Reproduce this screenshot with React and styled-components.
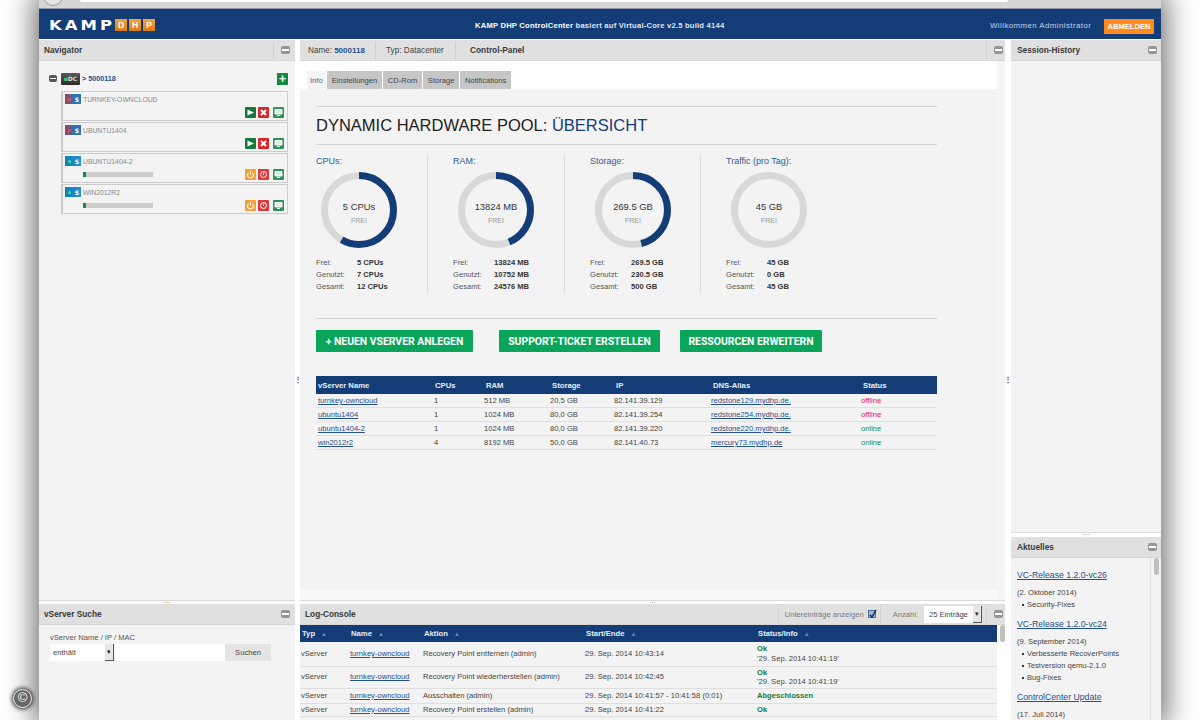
import styled, { createGlobalStyle } from "styled-components";

const BLUE = "#143d78";

const servers = [
  { name: "TURNKEY-OWNCLOUD", on: false },
  { name: "UBUNTU1404", on: false },
  { name: "UBUNTU1404-2", on: true },
  { name: "WIN2012R2", on: true },
];

const pools = [
  { title: "CPUs:", big: "5 CPUs", used: 7 / 12, rows: ["5 CPUs", "7 CPUs", "12 CPUs"] },
  { title: "RAM:", big: "13824 MB", used: 10752 / 24576, rows: ["13824 MB", "10752 MB", "24576 MB"] },
  { title: "Storage:", big: "269.5 GB", used: 230.5 / 500, rows: ["269.5 GB", "230.5 GB", "500 GB"] },
  { title: "Traffic (pro Tag):", big: "45 GB", used: 0, rows: ["45 GB", "0 GB", "45 GB"] },
];

const poolWidths = [112, 137, 136, 150];

const vservers = [
  ["turnkey-owncloud", "1", "512 MB", "20,5 GB", "82.141.39.129", "redstone129.mydhp.de.", "offline"],
  ["ubuntu1404", "1", "1024 MB", "80,0 GB", "82.141.39.254", "redstone254.mydhp.de.", "offline"],
  ["ubuntu1404-2", "1", "1024 MB", "80,0 GB", "82.141.39.220", "redstone220.mydhp.de.", "online"],
  ["win2012r2", "4", "8192 MB", "50,0 GB", "82.141.40.73", "mercury73.mydhp.de", "online"],
];

const logs = [
  { action: "Recovery Point entfernen (admin)", time: "29. Sep. 2014 10:43:14", status: "Ok", info: "'29. Sep. 2014 10:41:19'", h: 24 },
  { action: "Recovery Point wiederherstellen (admin)", time: "29. Sep. 2014 10:42:45", status: "Ok", info: "'29. Sep. 2014 10:41:19'", h: 22 },
  { action: "Ausschalten (admin)", time: "29. Sep. 2014 10:41:57 - 10:41:58 (0:01)", status: "Abgeschlossen", h: 15 },
  { action: "Recovery Point erstellen (admin)", time: "29. Sep. 2014 10:41:22", status: "Ok", h: 13 },
];

const news = [
  { title: "VC-Release 1.2.0-vc26", date: "(2. Oktober 2014)", items: ["Security-Fixes"] },
  { title: "VC-Release 1.2.0-vc24", date: "(9. September 2014)", items: ["Verbesserte RecoverPoints", "Testversion qemu-2.1.0", "Bug-Fixes"] },
  { title: "ControlCenter Update", date: "(17. Juli 2014)", items: [] },
];

const GlobalStyle = createGlobalStyle`
  html, body {
    margin: 0;
    height: 720px;
    overflow: hidden;
    background: #ffffff;
    font-family: "Liberation Sans", Arial, sans-serif;
    font-size: 7.6px;
    color: #444;
  }
  a { color: #24508f; }
`;

const Win = styled.div`
  width: 1122px;
  height: 720px;
  margin-left: 39px;
  background: #fff;
  box-shadow: 0 0 26px 6px rgba(0, 0, 0, 0.55);
  display: flex;
  flex-direction: column;
  overflow: hidden;
`;

const Chrome = styled.div`
  height: 9px;
  flex: none;
  background: #d6d6d6;
  border-bottom: 1px solid #8f98a5;
  box-sizing: border-box;
  display: flex;
  align-items: flex-start;
  padding-left: 4px;
`;

const ChromeRound = styled.div`
  width: 20px;
  height: 20px;
  margin-top: -14px;
  border-radius: 50%;
  border: 1px solid #999;
  box-sizing: border-box;
  background: #e4e4e4;
`;

const ChromeField = styled.div`
  width: 928px;
  height: 2px;
  margin-left: 17px;
  background: #fff;
  border-radius: 0 0 4px 4px;
`;

const TopBar = styled.header`
  height: 30px;
  flex: none;
  box-sizing: border-box;
  background: ${BLUE};
  display: flex;
  align-items: center;
  padding: 2px 7px 0 10px;
`;

const Logo = styled.div`
  width: 426px;
  display: flex;
  align-items: center;
  flex: none;
`;

const LogoWord = styled.span`
  font-family: "DejaVu Sans", sans-serif;
  font-weight: 700;
  font-size: 16.5px;
  letter-spacing: 3px;
  margin-right: -2px;
  color: #fff;
  line-height: 15px;
  transform: scaleY(0.84);
`;

const LogoTile = styled.span`
  width: 12px;
  height: 12px;
  margin-left: 2px;
  background: linear-gradient(#f6a33a, #dc7c12);
  color: #fff;
  font-weight: 700;
  font-size: 8.5px;
  line-height: 12px;
  text-align: center;
`;

const TopTitle = styled.div`
  width: 515px;
  flex: none;
  font-weight: 700;
  font-size: 7.6px;
  letter-spacing: 0.22px;
  color: #dfe6f0;
  b { color: #fff; }
`;

const Welcome = styled.div`
  font-size: 7.9px;
  letter-spacing: 0.42px;
  color: #c6d2e4;
  flex: 1;
`;

const Logout = styled.button`
  width: 50px;
  height: 15px;
  margin-top: 3px;
  padding: 0;
  border: 0;
  background: #ff8a1f;
  color: #fff;
  font: 700 7.6px "Liberation Sans", Arial, sans-serif;
`;

const Main = styled.div`
  flex: 1;
  min-height: 0;
  display: grid;
  grid-template-columns: 256px 5px 705px 6px 150px;
`;

const Column = styled.div`
  display: flex;
  flex-direction: column;
  min-height: 0;
  padding-top: 1px;
`;

const Panel = styled.section`
  display: flex;
  flex-direction: column;
  min-height: 0;
  flex: ${(p) => (p.$height ? `0 0 ${p.$height}px` : "1")};
  background: #f3f3f3;
  overflow: hidden;
`;

const PanelHead = styled.div`
  height: 21px;
  flex: none;
  background: #e0e0e0;
  border-bottom: 1px solid #d6d6d6;
  box-sizing: border-box;
  display: flex;
  align-items: center;
  padding: 0 ${(p) => p.$right || 5}px 0 ${(p) => p.$left || 5}px;
  font-size: 8.2px;
  color: #444;
`;

const PanelTitle = styled.div`
  font-weight: 700;
  font-size: 8.3px;
  color: #3a3a3a;
  flex: 1;
`;

const HeadCell = styled.div`
  height: 17px;
  display: flex;
  align-items: center;
  box-sizing: border-box;
  width: ${(p) => p.$w}px;
  padding-left: ${(p) => p.$pad || 0}px;
  border-right: ${(p) => (p.$line ? "1px solid #cfcfcf" : "0")};
  b { color: #24508f; margin-left: 2px; font-weight: 700; font-size: 8px; }
`;

const Minimize = styled.span`
  width: 9px;
  height: 8px;
  flex: none;
  margin: 0 0 0 auto;
  border-radius: 2px;
  background: #959595;
  display: flex;
  align-items: center;
  justify-content: center;
  &::after {
    content: "";
    width: 7px;
    height: 2px;
    background: #fff;
  }
`;

const MinCell = styled.div`
  width: 16px;
  height: 17px;
  margin-left: ${(p) => (p.$flush ? 0 : "auto")};
  border-left: 1px solid #cfcfcf;
  display: flex;
  align-items: center;
  flex: none;
`;

const HSplit = styled.div`
  height: ${(p) => p.$h || 4}px;
  flex: none;
  background: #fff;
  border-top: 1px solid #d9d9d9;
  box-sizing: border-box;
  color: #555;
  font-size: 7px;
  line-height: 0;
  text-align: center;
`;

const VSplit = styled.div`
  background: #fff;
  display: flex;
  align-items: center;
  justify-content: center;
  color: #555;
  font-size: 8px;
  font-weight: 700;
`;

const NavBody = styled.div`
  flex: 1;
  padding: 11px 7px 0 10px;
`;

const TreeRoot = styled.div`
  height: 13px;
  display: flex;
  align-items: center;
  font-weight: 700;
  font-size: 7.2px;
  color: #24508f;
  margin-bottom: 6px;
`;

const TreeToggle = styled.span`
  width: 8px;
  height: 7px;
  margin: 0 4px 0 0;
  border-radius: 2px;
  background: #555;
  display: flex;
  align-items: center;
  justify-content: center;
  &::after {
    content: "";
    width: 6px;
    height: 1.5px;
    background: #fff;
  }
`;

const DcBadge = styled.span`
  width: 19px;
  height: 12px;
  margin-right: 2px;
  background: linear-gradient(#5a5a5a, #2c2c2c);
  color: #ddd;
  font: 700 6px "DejaVu Sans", sans-serif;
  line-height: 12px;
  text-align: center;
  border-radius: 1px;
  i { color: #3ed35f; font-style: normal; }
`;

const AddBtn = styled.span`
  width: 11px;
  height: 12px;
  margin-left: auto;
  background: #0f8a3f;
  color: #fff;
  font: 700 12px/12px "Liberation Sans", sans-serif;
  text-align: center;
`;

const Cards = styled.div`
  margin-left: 12px;
  display: flex;
  flex-direction: column;
  gap: 1px;
`;

const Card = styled.div`
  height: 30px;
  box-sizing: border-box;
  border: 1px solid #cbcbcb;
  border-left-width: 2px;
  padding: 2px 3px 0 2px;
`;

const CardTop = styled.div`
  height: 10px;
  display: flex;
  align-items: center;
  color: #888;
  font-size: 6.8px;
`;

const VmBadge = styled.span`
  width: 16px;
  height: 10px;
  margin-right: 2px;
  flex: none;
  display: flex;
  align-items: center;
  justify-content: space-between;
  padding: 0 2px 0 3px;
  box-sizing: border-box;
  background: ${(p) => (p.$on ? "linear-gradient(90deg,#0f7fb8,#2293d0)" : "linear-gradient(90deg,#a83f58,#2a73b8 60%)")};
  color: #fff;
  font: 700 6px "DejaVu Sans", sans-serif;
  i {
    width: 3px;
    height: 3px;
    border-radius: 50%;
    background: ${(p) => (p.$on ? "#4fe08a" : "#ff4a55")};
  }
`;

const CardBottom = styled.div`
  height: 12px;
  margin-top: 2px;
  display: flex;
  align-items: center;
`;

const Progress = styled.div`
  width: 70px;
  height: 5px;
  margin: 0 0 0 18px;
  background: #ccc;
  &::before {
    content: "";
    display: block;
    width: 3px;
    height: 5px;
    background: #1c8a3f;
  }
`;

const Actions = styled.div`
  margin-left: auto;
  display: flex;
  align-items: center;
`;

const Act = styled.span`
  width: 11px;
  height: 11px;
  margin-left: ${(p) => p.$gap || 2}px;
  display: flex;
  background: ${(p) => p.$bg};
  border-radius: 1px;
  svg { display: block; }
`;

function IconPlay() {
  return (
    <Act $bg="#137a3c">
      <svg width="11" height="11" viewBox="0 0 11 11"><path d="M2.5 2.5L9 5.5L2.5 8.5Z" fill="#fff" /></svg>
    </Act>
  );
}
function IconStop() {
  return (
    <Act $bg="#d9252b">
      <svg width="11" height="11" viewBox="0 0 11 11"><path d="M3 3L8 8M8 3L3 8" stroke="#fff" strokeWidth="2" /></svg>
    </Act>
  );
}
function IconScreen() {
  return (
    <Act $bg="#2f9158" $gap={4}>
      <svg width="11" height="11" viewBox="0 0 11 11"><path d="M2 2.5H9V7H2Z M4 8.5H7" fill="#d9efe0" stroke="#fff" /></svg>
    </Act>
  );
}
function IconPower() {
  return (
    <Act $bg="#f5a032">
      <svg width="11" height="11" viewBox="0 0 11 11"><path d="M3.5 3.8A3 3 0 1 0 7.5 3.8M5.5 2V5.5" fill="none" stroke="#fff" strokeWidth="1.1" /></svg>
    </Act>
  );
}
function IconHalt() {
  return (
    <Act $bg="#e0363c">
      <svg width="11" height="11" viewBox="0 0 11 11"><circle cx="5.5" cy="5.5" r="3" fill="none" stroke="#fff" /><path d="M5.5 3.8V6" stroke="#fff" /></svg>
    </Act>
  );
}

const SearchBody = styled.div`
  padding: 8px 0 0 11px;
  color: #555;
`;

const SearchRow = styled.div`
  display: flex;
  margin-top: 2px;
  height: 17px;
`;

const FakeSelect = styled.div`
  width: ${(p) => p.$w}px;
  height: 17px;
  margin-left: ${(p) => p.$left || 0}px;
  box-sizing: border-box;
  background: #fff;
  display: flex;
  align-items: center;
  padding-left: ${(p) => p.$pad || 3}px;
  color: #444;
  flex: none;
  &::after {
    content: "▾";
    width: 9px;
    height: 100%;
    margin-left: auto;
    background: #e6e6e6;
    border-right: 1px solid #555;
    border-bottom: 1px solid #555;
    box-sizing: border-box;
    font-size: 7px;
    display: flex;
    align-items: center;
    justify-content: center;
    color: #222;
  }
`;

const SearchInput = styled.div`
  width: 110px;
  margin-left: 1px;
  background: #fff;
`;

const SearchBtn = styled.div`
  width: 46px;
  background: #e4e4e4;
  display: flex;
  align-items: center;
  justify-content: center;
  color: #444;
`;

const CenterBody = styled.div`
  flex: 1;
  display: flex;
  min-height: 0;
`;

const CenterInner = styled.div`
  width: 697px;
  flex: none;
  background: #fff;
  padding-top: 10px;
  display: flex;
  flex-direction: column;
  border-bottom: 10px solid #f9f9f9;
`;

const Tabs = styled.div`
  display: flex;
  height: 18px;
  padding-left: 7px;
  gap: 1.5px;
  flex: none;
`;

const Tab = styled.div`
  padding: 0 ${(p) => (p.$active ? 3 : 4.5)}px;
  display: flex;
  align-items: center;
  font-size: 7.6px;
  color: ${(p) => (p.$active ? "#3c6aa5" : "#444")};
  background: ${(p) => (p.$active ? "#f3f3f3" : "#c6c6c6")};
`;

const Content = styled.div`
  flex: 1;
  background: #f3f3f3;
  padding: 17px 60px 0 16px;
`;

const Rule = styled.hr`
  border: 0;
  height: 1px;
  margin: ${(p) => p.$top || 0}px 0 0;
  background: #d4d4d4;
`;

const Title = styled.h1`
  margin: 0;
  height: 37px;
  font-weight: 400;
  font-size: 16.5px;
  line-height: 37px;
  color: #222;
  span { color: ${BLUE}; }
`;

const PoolRow = styled.div`
  display: flex;
  margin-top: 10px;
  height: 138px;
`;

const Pool = styled.div`
  flex: none;
  box-sizing: border-box;
  width: ${(p) => p.$w}px;
  padding-left: ${(p) => (p.$first ? 0 : 25)}px;
  border-right: ${(p) => (p.$last ? "0" : "1px solid #dcdcdc")};
`;

const PoolTitle = styled.div`
  font-size: 9px;
  color: #2f5c96;
  height: 17px;
  line-height: 12px;
`;

const Ring = styled.div`
  position: relative;
  width: 76px;
  height: 76px;
  margin: 0 0 9px 5px;
`;

const RingLabel = styled.div`
  position: absolute;
  inset: 0;
  padding-top: 4px;
  box-sizing: border-box;
  display: flex;
  flex-direction: column;
  align-items: center;
  justify-content: center;
  font-size: 9.4px;
  color: #333;
  small {
    font-size: 7px;
    color: #999;
    margin-top: 5px;
  }
`;

const StatRow = styled.div`
  display: flex;
  height: 12px;
  line-height: 12px;
  color: #555;
  span { width: 41px; }
  b { color: #333; }
`;

const ActionRow = styled.div`
  display: flex;
  margin: 11px 0 24px;
`;

const GreenBtn = styled.button`
  height: 22px;
  width: ${(p) => p.$w}px;
  margin-right: ${(p) => p.$gap || 0}px;
  padding: 0;
  border: 0;
  border-radius: 1px;
  background: #09a55b;
  color: #fff;
  font: 700 10.4px "Roboto", sans-serif;
`;

const Grid = styled.table`
  width: 621px;
  border-collapse: collapse;
  table-layout: fixed;
  color: #444;
  th {
    height: 18px;
    padding: 0 0 0 2px;
    background: ${BLUE};
    color: #e8edf5;
    font-weight: 700;
    text-align: left;
    font-size: 7.7px;
  }
  th:nth-child(n + 3) { padding-left: 3px; }
  td {
    height: 13px;
    padding: 0 0 0 1px;
    border-bottom: 1px solid #e0e0e0;
  }
  td:first-child { padding-left: 2px; }
`;

const Stat = styled.span`
  color: ${(p) => (p.$on ? "#2a8a48" : "#e0262c")};
`;

const LogTools = styled.div`
  display: flex;
  align-items: center;
  margin-left: auto;
  color: #777;
  font-size: 7.6px;
`;

const ToolCell = styled.div`
  height: 17px;
  display: flex;
  align-items: center;
  border-left: 1px solid #cfcfcf;
  padding: 0 4px 0 ${(p) => p.$pad || 6}px;
`;

const Check = styled.span`
  width: 8px;
  height: 8px;
  margin-left: 4px;
  background: #9db7dc;
  border: 1px solid #4a6fa5;
  box-sizing: border-box;
  svg { display: block; margin: -2px 0 0 0; }
`;

const LogWrap = styled.div`
  flex: 1;
  display: flex;
  min-height: 0;
`;

const LogTable = styled.table`
  width: 697px;
  flex: none;
  height: min-content;
  border-collapse: collapse;
  table-layout: fixed;
  color: #444;
  th {
    height: 17px;
    padding: 0 0 0 2px;
    background: ${BLUE};
    color: #e8edf5;
    font-weight: 700;
    text-align: left;
    font-size: 7.7px;
  }
  th i {
    color: #6c8ab5;
    font-style: normal;
    font-weight: 400;
    margin-left: 6px;
    font-size: 6px;
  }
  td {
    padding: 0 0 0 1px;
    border-bottom: 1px solid #dedede;
    line-height: 9.5px;
  }
`;

const LogRow = styled.tr`
  height: ${(p) => p.$h}px;
`;

const Okay = styled.b`
  color: #137a38;
  display: block;
`;

const ScrollTrack = styled.div`
  flex: 1;
  background: ${(p) => p.$bg || "#fff"};
  padding-left: ${(p) => p.$pad || 3}px;
`;

const ScrollThumb = styled.div`
  width: 5px;
  height: 17px;
  border-radius: 3px;
  background: #bfbfbf;
`;

const NewsWrap = styled.div`
  flex: 1;
  display: flex;
  min-height: 0;
`;

const NewsBody = styled.div`
  width: 140px;
  flex: none;
  box-sizing: border-box;
  padding: 11px 0 0 6px;
  border-right: 1px solid #e2e2e2;
  color: #444;
`;

const NewsLink = styled.a`
  display: block;
  height: 18px;
  line-height: 12px;
  font-size: 8.7px;
  white-space: nowrap;
`;

const NewsDate = styled.div`
  height: 12.3px;
  line-height: 12.3px;
`;

const NewsList = styled.ul`
  margin: 0 0 6px;
  padding: 0;
  list-style: none;
  li {
    height: 12.3px;
    line-height: 12.3px;
    padding-left: 10px;
    position: relative;
  }
  li::before {
    content: "";
    position: absolute;
    left: 5px;
    top: 5px;
    width: 2px;
    height: 2px;
    background: #333;
  }
`;

const Copyright = styled.div`
  position: absolute;
  left: 13px;
  top: 689px;
  width: 19px;
  height: 19px;
  box-sizing: border-box;
  border: 1.5px solid #eee;
  border-radius: 50%;
  background: #666;
  color: #fff;
  font: 13px/16px "Liberation Sans", sans-serif;
  text-align: center;
  box-shadow: 0 0 4px 1px #222;
`;

function Donut({ used }) {
  const r = 34.5;
  const c = 2 * Math.PI * r;
  return (
    <svg width="76" height="76" viewBox="0 0 76 76">
      <circle cx="38" cy="38" r={r} fill="none" stroke="#d8d8d8" strokeWidth="7" />
      <circle
        cx="38"
        cy="38"
        r={r}
        fill="none"
        stroke={BLUE}
        strokeWidth="7"
        strokeDasharray={`${c * used} ${c}`}
        transform="rotate(-90 38 38)"
      />
    </svg>
  );
}

export default function App() {
  return (
    <>
      <GlobalStyle />
      <Win>
        <Chrome>
          <ChromeRound />
          <ChromeField />
        </Chrome>
        <TopBar>
          <Logo>
            <LogoWord>KAMP</LogoWord>
            <LogoTile>D</LogoTile>
            <LogoTile>H</LogoTile>
            <LogoTile>P</LogoTile>
          </Logo>
          <TopTitle>
            <b>KAMP DHP ControlCenter</b> basiert auf Virtual-Core v2.5 build 4144
          </TopTitle>
          <Welcome>Willkommen Administrator</Welcome>
          <Logout>ABMELDEN</Logout>
        </TopBar>
        <Main>
          <Column>
            <Panel>
              <PanelHead>
                <PanelTitle>Navigator</PanelTitle>
                <MinCell><Minimize /></MinCell>
              </PanelHead>
              <NavBody>
                <TreeRoot>
                  <TreeToggle />
                  <DcBadge><i>▪</i>DC</DcBadge>
                  &gt; 5000118
                  <AddBtn>+</AddBtn>
                </TreeRoot>
                <Cards>
                  {servers.map((s) => (
                    <Card key={s.name}>
                      <CardTop>
                        <VmBadge $on={s.on}><i />S</VmBadge>
                        {s.name}
                      </CardTop>
                      <CardBottom>
                        {s.on && <Progress />}
                        <Actions>
                          {s.on ? <IconPower /> : <IconPlay />}
                          {s.on ? <IconHalt /> : <IconStop />}
                          <IconScreen />
                        </Actions>
                      </CardBottom>
                    </Card>
                  ))}
                </Cards>
              </NavBody>
            </Panel>
            <HSplit>…</HSplit>
            <Panel $height={116}>
              <PanelHead>
                <PanelTitle>vServer Suche</PanelTitle>
                <Minimize />
              </PanelHead>
              <SearchBody>
                vServer Name / IP / MAC
                <SearchRow>
                  <FakeSelect $w={64}>enthält</FakeSelect>
                  <SearchInput />
                  <SearchBtn>Suchen</SearchBtn>
                </SearchRow>
              </SearchBody>
            </Panel>
          </Column>
          <VSplit>⋮</VSplit>
          <Column>
            <Panel>
              <PanelHead $right={2}>
                <HeadCell $w={71} $pad={3} $line>Name:<b>5000118</b></HeadCell>
                <HeadCell $w={80} $pad={10} $line>Typ: Datacenter</HeadCell>
                <HeadCell $w={90} $pad={14}><PanelTitle>Control-Panel</PanelTitle></HeadCell>
                <MinCell><Minimize /></MinCell>
              </PanelHead>
              <CenterBody>
                <CenterInner>
                  <Tabs>
                    <Tab $active>Info</Tab>
                    <Tab>Einstellungen</Tab>
                    <Tab>CD-Rom</Tab>
                    <Tab>Storage</Tab>
                    <Tab>Notifications</Tab>
                  </Tabs>
                  <Content>
                    <Rule />
                    <Title>DYNAMIC HARDWARE POOL: <span>ÜBERSICHT</span></Title>
                    <Rule />
                    <PoolRow>
                      {pools.map((p, i) => (
                        <Pool key={p.title} $w={poolWidths[i]} $first={i === 0} $last={i === 3}>
                          <PoolTitle>{p.title}</PoolTitle>
                          <Ring>
                            <Donut used={p.used} />
                            <RingLabel>{p.big}<small>FREI</small></RingLabel>
                          </Ring>
                          {["Frei:", "Genutzt:", "Gesamt:"].map((l, j) => (
                            <StatRow key={l}><span>{l}</span><b>{p.rows[j]}</b></StatRow>
                          ))}
                        </Pool>
                      ))}
                    </PoolRow>
                    <Rule $top={25} />
                    <ActionRow>
                      <GreenBtn $w={157} $gap={26}>+ NEUEN VSERVER ANLEGEN</GreenBtn>
                      <GreenBtn $w={161} $gap={20}>SUPPORT-TICKET ERSTELLEN</GreenBtn>
                      <GreenBtn $w={142}>RESSOURCEN ERWEITERN</GreenBtn>
                    </ActionRow>
                    <Grid>
                      <colgroup>
                        <col width="117" /><col width="50" /><col width="66" /><col width="64" />
                        <col width="97" /><col width="150" /><col width="77" />
                      </colgroup>
                      <thead>
                        <tr>
                          <th>vServer Name</th><th>CPUs</th><th>RAM</th><th>Storage</th>
                          <th>IP</th><th>DNS-Alias</th><th>Status</th>
                        </tr>
                      </thead>
                      <tbody>
                        {vservers.map((v) => (
                          <tr key={v[0]}>
                            <td><a href="#s">{v[0]}</a></td>
                            <td>{v[1]}</td>
                            <td>{v[2]}</td>
                            <td>{v[3]}</td>
                            <td>{v[4]}</td>
                            <td><a href="#d">{v[5]}</a></td>
                            <td><Stat $on={v[6] === "online"}>{v[6]}</Stat></td>
                          </tr>
                        ))}
                      </tbody>
                    </Grid>
                  </Content>
                </CenterInner>
                <ScrollTrack $bg="#f5f5f5" />
              </CenterBody>
            </Panel>
            <HSplit>…</HSplit>
            <Panel $height={116}>
              <PanelHead $right={2}>
                <PanelTitle>Log-Console</PanelTitle>
                <LogTools>
                  <ToolCell>
                    Untereinträge anzeigen
                    <Check>
                      <svg width="8" height="10" viewBox="0 0 8 10"><path d="M1 6L3 8L7 1" fill="none" stroke="#123" strokeWidth="1.4" /></svg>
                    </Check>
                  </ToolCell>
                  <ToolCell $pad={12}>
                    Anzahl:
                    <FakeSelect $w={58} $pad={5} $left={6}>25 Einträge</FakeSelect>
                  </ToolCell>
                  <MinCell $flush><Minimize /></MinCell>
                </LogTools>
              </PanelHead>
              <LogWrap>
                <LogTable>
                  <colgroup>
                    <col width="49" /><col width="73" /><col width="162" /><col width="172" /><col width="241" />
                  </colgroup>
                  <thead>
                    <tr>
                      <th>Typ<i>▲</i></th><th>Name<i>▲</i></th><th>Aktion<i>▲</i></th>
                      <th>Start/Ende<i>▲</i></th><th>Status/Info<i>▲</i></th>
                    </tr>
                  </thead>
                  <tbody>
                    {logs.map((l) => (
                      <LogRow key={l.action} $h={l.h}>
                        <td>vServer</td>
                        <td><a href="#l">turnkey-owncloud</a></td>
                        <td>{l.action}</td>
                        <td>{l.time}</td>
                        <td><Okay>{l.status}</Okay>{l.info}</td>
                      </LogRow>
                    ))}
                  </tbody>
                </LogTable>
                <ScrollTrack><ScrollThumb /></ScrollTrack>
              </LogWrap>
            </Panel>
          </Column>
          <VSplit>⋮</VSplit>
          <Column>
            <Panel>
              <PanelHead $left={6} $right={4}>
                <PanelTitle>Session-History</PanelTitle>
                <Minimize />
              </PanelHead>
            </Panel>
            <HSplit $h={5}>…</HSplit>
            <Panel $height={183}>
              <PanelHead $left={6} $right={4}>
                <PanelTitle>Aktuelles</PanelTitle>
                <Minimize />
              </PanelHead>
              <NewsWrap>
                <NewsBody>
                  {news.map((n) => (
                    <div key={n.title}>
                      <NewsLink href="#n">{n.title}</NewsLink>
                      <NewsDate>{n.date}</NewsDate>
                      <NewsList>
                        {n.items.map((it) => <li key={it}>{it}</li>)}
                      </NewsList>
                    </div>
                  ))}
                </NewsBody>
                <ScrollTrack $pad={3} $bg="#f3f3f3"><ScrollThumb /></ScrollTrack>
              </NewsWrap>
            </Panel>
          </Column>
        </Main>
      </Win>
      <Copyright>©</Copyright>
    </>
  );
}
